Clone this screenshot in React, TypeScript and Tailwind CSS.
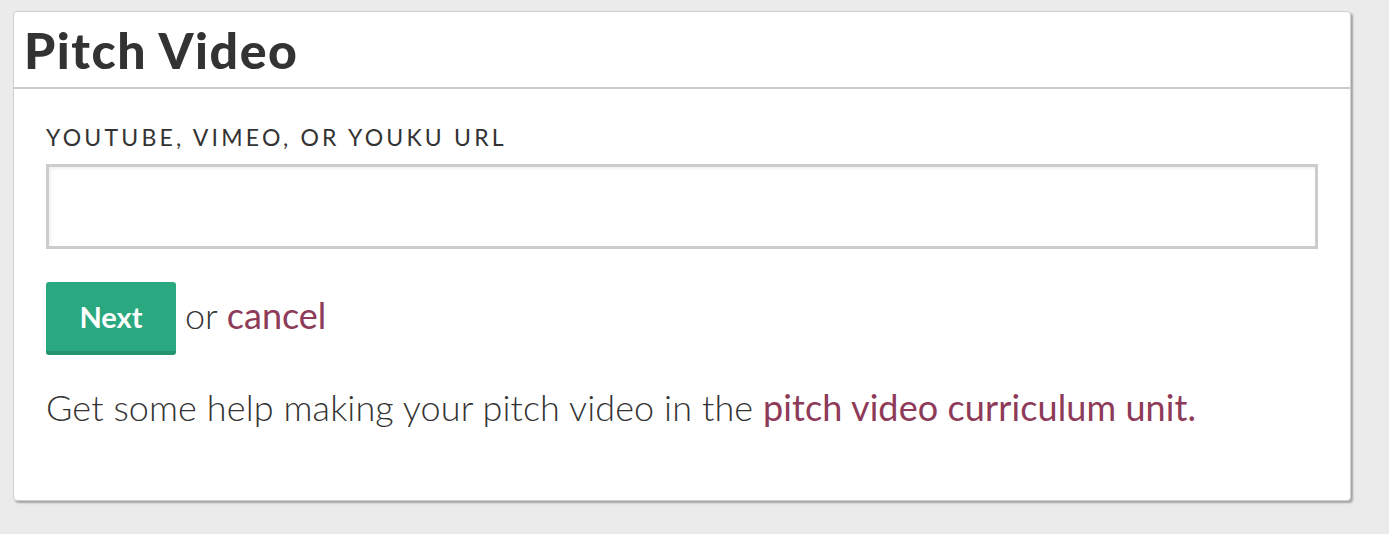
export default function App() {
  return (
    <div className="min-h-[534px] bg-[#ebebeb] pt-[11px] pl-[13px] pr-[38px] font-['Lato',sans-serif] text-[#333]">
      <div className="w-[1338px] rounded-[4px] border border-[#cfcfcf] bg-white shadow-[2px_2px_2px_rgba(0,0,0,0.3)]">
        <div className="flex h-[77px] items-center border-b-2 border-[#cccccc] pl-[10px]">
          <h1 className="text-[50px] font-black leading-none tracking-[1.5px] text-[#333]">Pitch Video</h1>
        </div>
        <div className="px-8 pt-[37px] pb-[75px]">
          <label className="block text-[23px] leading-none tracking-[0.14em] text-[#333]">
            YOUTUBE, VIMEO, OR YOUKU URL
          </label>
          <input
            type="text"
            className="mt-[15px] block h-[85px] w-full border-[3px] border-[#cccccc] bg-white shadow-[inset_2px_2px_3px_rgba(0,0,0,0.06)] outline-none"
          />
          <div className="mt-[33px] flex items-center">
            <button className="h-[73px] w-[130px] rounded-[3px] border-b-4 border-[#239370] bg-[#2aa880] text-[29px] font-bold text-white">
              Next
            </button>
            <span className="ml-[9px] pb-[8px] text-[36px] font-light text-[#333]">
              or <a className="font-normal text-[#8e3a59]">cancel</a>
            </span>
          </div>
          <p className="mt-[34px] text-[36px] font-light leading-none tracking-[0.1px] text-[#333]">
            Get some help making your pitch video in the{" "}
            <a className="font-normal text-[#8e3a59]">pitch video curriculum unit.</a>
          </p>
        </div>
      </div>
    </div>
  )
}
